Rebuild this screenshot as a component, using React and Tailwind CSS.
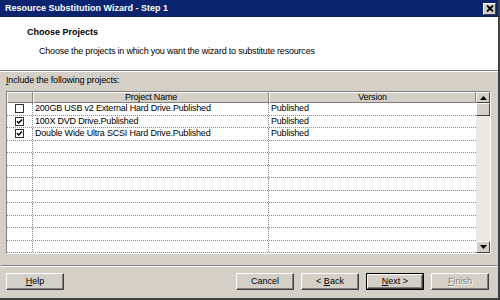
const FACE = '#d4d0c8'

const rows = [
  { checked: false, name: '200GB USB v2 External Hard Drive.Published', version: 'Published' },
  { checked: true, name: '100X DVD Drive.Published', version: 'Published' },
  { checked: true, name: 'Double Wide Ultra SCSI Hard Drive.Published', version: 'Published' },
  ...Array.from({ length: 9 }, () => null),
]

function CheckBox({ checked }) {
  return (
    <svg width="9" height="9" viewBox="0 0 9 9">
      <rect x="0.5" y="0.5" width="8" height="8" fill="#fff" stroke="#303030" />
      {checked && <path d="M2 4.2 L3.7 6 L7 2.5" fill="none" stroke="#000" strokeWidth="1.5" />}
    </svg>
  )
}

function Arrow({ up }) {
  return (
    <svg width="7" height="4" viewBox="0 0 7 4">
      <path d={up ? 'M0 4 L3.5 0 L7 4 Z' : 'M0 0 L3.5 4 L7 0 Z'} fill="#000" />
    </svg>
  )
}

function Btn({ children, disabled, isDefault }) {
  const inner = (
    <div
      className={
        'flex h-full w-full items-center justify-center border border-t-white border-l-white border-r-[#404040] border-b-[#404040] shadow-[inset_-1px_-1px_0_#808080] ' +
        (disabled ? 'text-[#808080] [text-shadow:1px_1px_0_#fff]' : 'text-black')
      }
      style={{ backgroundColor: FACE }}
    >
      {children}
    </div>
  )
  if (isDefault) return <div className="h-[17px] w-[58px] border border-black">{inner}</div>
  return <div className="h-[17px] w-[58px]">{inner}</div>
}

export default function App() {
  return (
    <div
      className="flex h-[300px] w-[500px] flex-col border-r-2 border-b-2 border-r-[#404040] border-b-[#404040] text-[9px] tracking-[-0.2px] text-black [font-family:'Liberation_Sans',Arial,sans-serif]"
      style={{ backgroundColor: FACE }}
    >
      {/* title bar */}
      <div className="flex h-[17px] shrink-0 items-center justify-between bg-[#0b2470] pl-[5px] pr-[2px]">
        <span className="text-[9px] font-bold tracking-normal text-white">Resource Substitution Wizard - Step 1</span>
        <span className="flex h-[12px] w-[13px] items-center justify-center border border-t-white border-l-white border-r-[#404040] border-b-[#404040] bg-[#d4d0c8]">
          <svg width="8" height="7" viewBox="0 0 8 7" className="block">
            <path d="M1 0.5 L7 6.5 M7 0.5 L1 6.5" stroke="#000" strokeWidth="1.8" />
          </svg>
        </span>
      </div>

      {/* header */}
      <div className="flex h-[54px] shrink-0 flex-col border-b border-b-[#808080] bg-white">
        <div className="pl-[27px] pt-[9px] text-[9px] font-bold tracking-normal leading-[12px]">Choose Projects</div>
        <div className="pl-[39px] pt-[7px] leading-[12px]">
          Choose the projects in which you want the wizard to substitute resources
        </div>
      </div>
      <div className="h-px shrink-0 bg-white" />

      {/* body */}
      <div className="flex flex-1 flex-col px-[6px] pt-[2px]">
        <div className="mb-[5px] h-[12px] leading-[12px] tracking-[-0.15px]">
          <span className="underline">I</span>nclude the following projects:
        </div>

        <div className="flex w-[485px] border border-t-[#808080] border-l-[#808080] border-r-white border-b-white">
          <div className="flex w-[469px] flex-col bg-white">
            {/* grid header */}
            <div className="flex h-[11px]" style={{ backgroundColor: FACE }}>
              <div className="w-[26px] border border-t-white border-l-white border-r-[#808080] border-b-[#808080]" />
              <div className="flex w-[236px] items-center justify-center border border-t-white border-l-white border-r-[#808080] border-b-[#808080] leading-none">
                Project Name
              </div>
              <div className="flex w-[207px] items-center justify-center border border-t-white border-l-white border-r-[#808080] border-b-[#808080] leading-none">
                Version
              </div>
            </div>
            {rows.map((r, i) => (
              <div key={i} className="flex h-[12.5px] border-b border-dotted border-b-[#8a8a8a]">
                <div className="flex w-[26px] items-center justify-center border-r border-dotted border-r-[#8a8a8a]">
                  {r && <CheckBox checked={r.checked} />}
                </div>
                <div className="flex w-[236px] items-center border-r border-dotted border-r-[#8a8a8a] pl-[2px] leading-none">
                  {r && r.name}
                </div>
                <div className="flex w-[207px] items-center pl-[2px] leading-none">{r && r.version}</div>
              </div>
            ))}
          </div>

          {/* scrollbar */}
          <div className="flex w-[14px] flex-col justify-between bg-[#ebe9e4]">
            <div className="flex flex-col">
              <div className="flex h-[11px] items-center justify-center border border-t-white border-l-white border-r-[#404040] border-b-[#404040]" style={{ backgroundColor: FACE }}>
                <Arrow up />
              </div>
              <div className="h-[13px] border border-t-white border-l-white border-r-[#404040] border-b-[#404040]" style={{ backgroundColor: FACE }} />
            </div>
            <div className="flex h-[12px] items-center justify-center border border-t-white border-l-white border-r-[#404040] border-b-[#404040]" style={{ backgroundColor: FACE }}>
              <Arrow />
            </div>
          </div>
        </div>
      </div>

      {/* separator */}
      <div className="mx-[1px] h-px shrink-0 bg-[#808080]" />
      <div className="mx-[1px] h-px shrink-0 bg-white" />

      {/* buttons */}
      <div className="flex h-[31px] shrink-0 items-start justify-between pl-[6px] pr-[9px] pt-[6px] tracking-normal">
        <Btn>
          <span><span className="underline">H</span>elp</span>
        </Btn>
        <div className="flex gap-[7px]">
          <Btn>Cancel</Btn>
          <Btn>
            <span>&lt; <span className="underline">B</span>ack</span>
          </Btn>
          <Btn isDefault>
            <span><span className="underline">N</span>ext &gt;</span>
          </Btn>
          <Btn disabled>
            <span><span className="underline">F</span>inish</span>
          </Btn>
        </div>
      </div>
    </div>
  )
}
